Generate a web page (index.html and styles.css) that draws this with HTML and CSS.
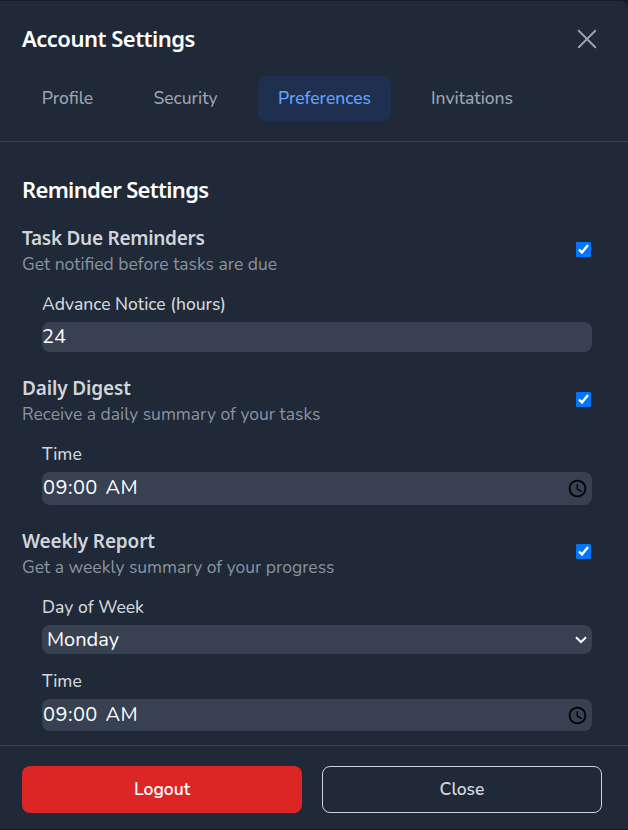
FILE: index.html
```html
<!DOCTYPE html>
<html lang="en">
<head>
<meta charset="utf-8">
<title>Account Settings</title>
<link rel="stylesheet" href="styles.css">
</head>
<body>
<div class="modal">
  <header class="header">
    <div class="title-row">
      <h2 class="title"><span>Account Settings</span></h2>
      <button class="icon-button" aria-label="Close">
        <svg width="30" height="30" viewBox="0 0 24 24" fill="none" stroke="currentColor" stroke-width="1.5" stroke-linecap="round"><path d="M5.4 5.4l13.2 13.2M18.6 5.4L5.4 18.6"/></svg>
      </button>
    </div>
    <nav class="tabs">
      <a class="tab tab-profile"><span>Profile</span></a>
      <a class="tab tab-security"><span>Security</span></a>
      <a class="tab tab-preferences active"><span>Preferences</span></a>
      <a class="tab tab-invitations"><span>Invitations</span></a>
    </nav>
  </header>
  <main class="content">
    <h3 class="section-title"><span>Reminder Settings</span></h3>
    <section class="setting">
      <div class="setting-head">
        <div><h4 class="name name-task"><span>Task Due Reminders</span></h4><p class="desc"><span>Get notified before tasks are due</span></p></div>
        <input type="checkbox" class="check" checked>
      </div>
      <div class="fields">
        <div class="label label-notice"><span>Advance Notice (hours)</span></div>
        <div class="control number"><span>24</span></div>
      </div>
    </section>
    <section class="setting">
      <div class="setting-head">
        <div><h4 class="name"><span>Daily Digest</span></h4><p class="desc"><span>Receive a daily summary of your tasks</span></p></div>
        <input type="checkbox" class="check" checked>
      </div>
      <div class="fields">
        <div class="label"><span>Time</span></div>
        <div class="control time"><span>09:00 AM</span>
          <svg class="clock" width="21" height="21" viewBox="0 0 24 24"><path d="M11.99 2C6.47 2 2 6.48 2 12s4.47 10 9.99 10C17.52 22 22 17.52 22 12S17.52 2 11.99 2zM12 20c-4.42 0-8-3.58-8-8s3.58-8 8-8 8 3.580 8 8-3.580 8-8 8z"/><path d="M12.500 7H11v6l5.250 3.150.750-1.230-4.500-2.670z"/></svg>
        </div>
      </div>
    </section>
    <section class="setting">
      <div class="setting-head">
        <div><h4 class="name"><span>Weekly Report</span></h4><p class="desc"><span>Get a weekly summary of your progress</span></p></div>
        <input type="checkbox" class="check check-weekly" checked>
      </div>
      <div class="fields">
        <div class="label label-day"><span>Day of Week</span></div>
        <div class="control select"><span>Monday</span>
          <svg class="chevron" width="12" height="8" viewBox="0 0 12 8" fill="none" stroke="#fff" stroke-width="2"><path d="M1 1.200l5 4.800 5-4.800"/></svg>
        </div>
        <div class="label"><span>Time</span></div>
        <div class="control time last"><span>09:00 AM</span>
          <svg class="clock" width="21" height="21" viewBox="0 0 24 24"><path d="M11.99 2C6.47 2 2 6.48 2 12s4.47 10 9.99 10C17.52 22 22 17.52 22 12S17.52 2 11.99 2zM12 20c-4.42 0-8-3.58-8-8s3.58-8 8-8 8 3.580 8 8-3.580 8-8 8z"/><path d="M12.500 7H11v6l5.250 3.150.750-1.230-4.500-2.670z"/></svg>
        </div>
      </div>
    </section>
  </main>
  <footer class="footer">
    <button class="button logout"><span>Logout</span></button>
    <button class="button close"><span>Close</span></button>
  </footer>
</div>
</body>
</html>
```
FILE: styles.css
```css
* { box-sizing: border-box; margin: 0; padding: 0; }
body {
  background: #161b27;
  font-family: Nunito, Lato, "Open Sans", sans-serif;
  font-size: 17.5px;
  color: #d1d5db;
  overflow: hidden;
}
.modal {
  display: flex;
  flex-direction: column;
  height: 828px;
  margin-top: 1px;
  background: #1f2937;
  border-radius: 0 8px 0 0;
}
.header { height: 141px; padding: 20px 26px 20px 22px; border-bottom: 1px solid #374151; }
.title-row { display: flex; justify-content: space-between; align-items: center; height: 36px; }
h2, h3, h4 { font-family: "Noto Sans", "Open Sans", sans-serif; font-weight: 600; }
.title, .section-title { font-size: 22px; color: #fff; letter-spacing: -0.5px; }
.title { padding-bottom: 2px; }
.icon-button { display: flex; border: 0; background: none; color: #9ca3af; }
.tabs { display: flex; gap: 20px; margin-top: 19px; }
.tab { display: flex; align-items: center; justify-content: center; height: 45px; padding-bottom: 2px; border-radius: 8px; color: #9ca3af; font-weight: 500; }
.tab-profile { width: 91px; }
.tab-security { width: 105px; }
.tab-preferences { width: 133px; }
.tab-invitations { width: 122px; }
.active { background: #1e2f50; color: #60a5fa; }
.content { height: 603px; padding: 30px 36px 0 22px; }
.section-title { height: 35px; line-height: 34px; letter-spacing: -0.68px; }
.setting-head { display: flex; justify-content: space-between; align-items: center; height: 55px; margin-top: 17px; }
.setting + .setting .setting-head { margin-top: 22px; }
.name { font-size: 19px; line-height: 29px; letter-spacing: -0.15px; }
.name-task { letter-spacing: -0.28px; }
.desc { line-height: 22px; padding-bottom: 4px; color: #8b93a1; }
.check { width: 15px; height: 15px; margin-right: 1px; margin-top: -4px; accent-color: #0075ff; }
.check-weekly { margin-top: -6px; }
.fields { padding: 14px 0 0 20px; }
.label { height: 29px; line-height: 23px; font-weight: 500; }
.control { display: flex; align-items: center; justify-content: space-between; height: 30px; border-radius: 8px; background: #374151; color: #fff; font-size: 20px; }
.number { padding-bottom: 1px; }
.time { height: 33px; padding: 0 4px 2px 1px; word-spacing: 2px; letter-spacing: 0.45px; }
.clock { margin-top: 2px; }
.select { height: 29px; padding: 0 5px; margin-bottom: 16px; }
.last { height: 32px; }
.footer { display: flex; gap: 20px; padding: 20px 26px 0 22px; height: 84px; border-top: 1px solid #374151; }
.button { width: 280px; height: 47px; padding-bottom: 2px; border: 0; border-radius: 8px; font: 600 17.5px Nunito, Lato, sans-serif; }
.logout { background: #dc2626; color: #fff; }
.close { background: none; border: 1px solid #d1d5db; color: #d1d5db; }
```
